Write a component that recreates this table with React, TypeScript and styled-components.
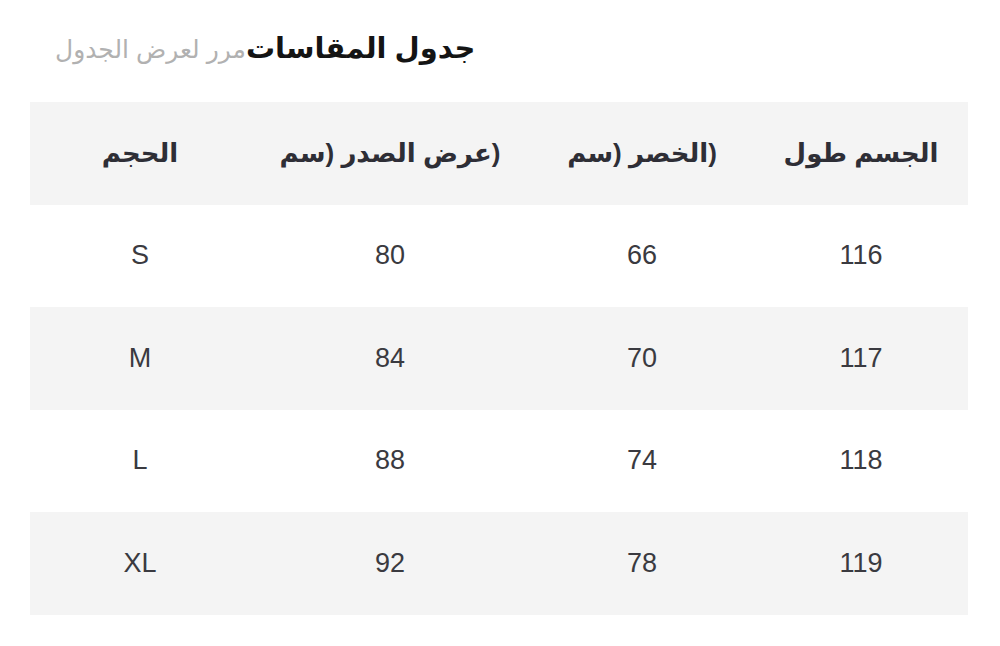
import React, {FC} from 'react'
import styled, {createGlobalStyle} from 'styled-components'

const GlobalStyle = createGlobalStyle`
body {
  margin:0;
  background:#fff;
  font-family:"Liberation Sans", "DejaVu Sans", sans-serif;
}
`

const Page = styled.div`
width:1000px;
padding-bottom:60px;
`

const TitleBar = styled.div`
direction:rtl;
display:flex;
justify-content:flex-end;
align-items:baseline;
height:102px;
box-sizing:border-box;
padding:31px 0 0 55px;
`

const Title = styled.h1`
margin:0;
font-size:29px;
font-weight:bold;
color:#141414;
`

const Hint = styled.span`
font-size:25px;
color:#b1b1b1;
`

const Table = styled.div`
margin-left:30px;
width:938px;
`

const Row = styled.div<{$shaded?: boolean}>`
display:grid;
grid-template-columns:220px 280px 224px 1fr;
height:102.5px;
align-items:center;
background:${p => p.$shaded ? '#f4f4f4' : '#fff'};
`

const Cell = styled.div<{$head?: boolean}>`
text-align:center;
font-size:${p => p.$head ? '26px' : '27px'};
font-weight:${p => p.$head ? 'bold' : 'normal'};
color:${p => p.$head ? '#2e2e36' : '#3a3a40'};
white-space:nowrap;
`

type Size = {
  size:string;
  chest:number;
  waist:number;
  length:number;
}

const sizes:Size[] = [
  {size:'S', chest:80, waist:66, length:116},
  {size:'M', chest:84, waist:70, length:117},
  {size:'L', chest:88, waist:74, length:118},
  {size:'XL', chest:92, waist:78, length:119},
]

// header labels keep the "(سم" order from the source screen
const UnitLabel:FC<{name:string}> = ({name}) => (
  <>
    <bdi>سم</bdi>{') '}<bdi>{name}</bdi>{')'}
  </>
)

const App:FC = () => {
  return (
    <Page>
      <GlobalStyle/>
      <TitleBar>
        <Title>جدول المقاسات</Title>
        <Hint>مرر لعرض الجدول</Hint>
      </TitleBar>
      <Table>
        <Row $shaded>
          <Cell $head>الحجم</Cell>
          <Cell $head><UnitLabel name='عرض الصدر'/></Cell>
          <Cell $head><UnitLabel name='الخصر'/></Cell>
          <Cell $head>الجسم طول</Cell>
        </Row>
        {sizes.map((s, i) => (
          <Row key={s.size} $shaded={i % 2 === 1}>
            <Cell>{s.size}</Cell>
            <Cell>{s.chest}</Cell>
            <Cell>{s.waist}</Cell>
            <Cell>{s.length}</Cell>
          </Row>
        ))}
        <Row/>
      </Table>
    </Page>
  )
}

export default App
